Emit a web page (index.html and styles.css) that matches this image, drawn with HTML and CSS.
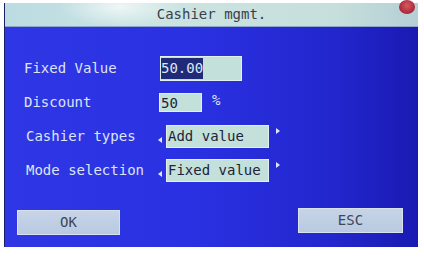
FILE: index.html
```html
<!DOCTYPE html>
<html lang="en">
<head>
  <meta charset="UTF-8" />
  <title>Cashier mgmt.</title>
  <link rel="stylesheet" href="styles.css">
</head>
<body>

  <div class="screen">
    <div class="titlebar">
      Cashier mgmt.
      <span class="close"></span>
    </div>

    <div class="form">
      <div class="label">Fixed Value</div>
      <div class="field">
        <span class="box box-wide"><span class="sel">50.00</span></span>
      </div>

      <div class="label">Discount</div>
      <div class="field">
        <span class="box box-short">50</span>
        <span class="unit">%</span>
      </div>

      <div class="label label-shift">Cashier types</div>
      <div class="field">
        <span class="arrow arrow-l"></span>
        <span class="box box-select">Add value</span>
        <span class="arrow arrow-r"></span>
      </div>

      <div class="label label-shift">Mode selection</div>
      <div class="field">
        <span class="arrow arrow-l"></span>
        <span class="box box-select">Fixed value</span>
        <span class="arrow arrow-r"></span>
      </div>
    </div>

    <div class="buttons">
      <div class="btn btn-ok">OK</div>
      <div class="btn btn-esc">ESC</div>
    </div>
  </div>

</body>
</html>
```

FILE: styles.css
```css
body {
  margin: 0;
  background: #fff;
  font-family: 'DejaVu Sans Mono', 'Liberation Mono', monospace;
  font-size: 14px;
}

.screen {
  margin: 3px 0 0 4px;
  width: 414px;
  height: 244px;
  border-left: 1px solid #1a1f6a;
  box-sizing: border-box;
  background: linear-gradient(90deg, #2f36e4 0%, #2a31e2 45%, #2226cc 80%, #1a1ab2 100%);
  display: flex;
  flex-direction: column;
}

.titlebar {
  position: relative;
  height: 24px;
  line-height: 22px;
  text-align: center;
  color: #3b4048;
  background:
    radial-gradient(ellipse 60px 20px at 115px 4px, rgba(255,255,255,0.7), rgba(255,255,255,0) 100%),
    linear-gradient(90deg, #bcdce2 0%, #cbe4e2 40%, #c6dfdc 80%, #b4cfd6 100%);
  border-bottom: 1px solid #8fa6c8;
  box-sizing: border-box;
}

.close {
  position: absolute;
  right: 3px;
  top: -3px;
  width: 16px;
  height: 14px;
  border-radius: 50%;
  background: radial-gradient(circle at 50% 40%, #d85a60, #a8263a 70%);
}

.form {
  display: grid;
  grid-template-columns: 134px 1fr;
  grid-auto-rows: 34px;
  align-items: center;
  padding: 24px 0 0 19px;
  color: #dde4f4;
}

.label-shift {
  padding-left: 2px;
}

.field {
  display: flex;
  align-items: center;
}

.box {
  display: inline-block;
  box-sizing: border-box;
  background: #c4e0da;
  color: #1d2438;
  border: 1px solid #e2f0ee;
}

.box-wide {
  width: 82px;
  height: 25px;
  margin-left: 2px;
  padding: 1px 0 0 0;
}

.sel {
  display: inline-block;
  width: 42px;
  height: 21px;
  line-height: 21px;
  background: #1f2a78;
  color: #dfe8f6;
}

.box-short {
  width: 43px;
  height: 19px;
  line-height: 18px;
  margin-left: 1px;
  padding-left: 1px;
}

.unit {
  margin-left: 10px;
  margin-top: -4px;
}

.box-select {
  width: 103px;
  height: 23px;
  line-height: 21px;
  padding-left: 1px;
}

.arrow {
  width: 0;
  height: 0;
  border-style: solid;
}

.arrow-l {
  margin: 8px 4px 0 0;
  border-width: 3px 4px 3px 0;
  border-color: transparent #dfe6f6 transparent transparent;
}

.arrow-r {
  margin: -10px 0 0 7px;
  border-width: 3px 0 3px 4px;
  border-color: transparent transparent transparent #dfe6f6;
}

.buttons {
  display: flex;
  justify-content: space-between;
  padding: 21px 15px 0 12px;
}

.btn {
  box-sizing: border-box;
  height: 25px;
  line-height: 23px;
  text-align: center;
  color: #3e4658;
  background: linear-gradient(180deg, #c6d4e6, #b8cae2);
  border: 1px solid #d8e2f0;
}

.btn-ok {
  width: 103px;
  margin-top: 2px;
}

.btn-esc {
  width: 105px;
}
```
